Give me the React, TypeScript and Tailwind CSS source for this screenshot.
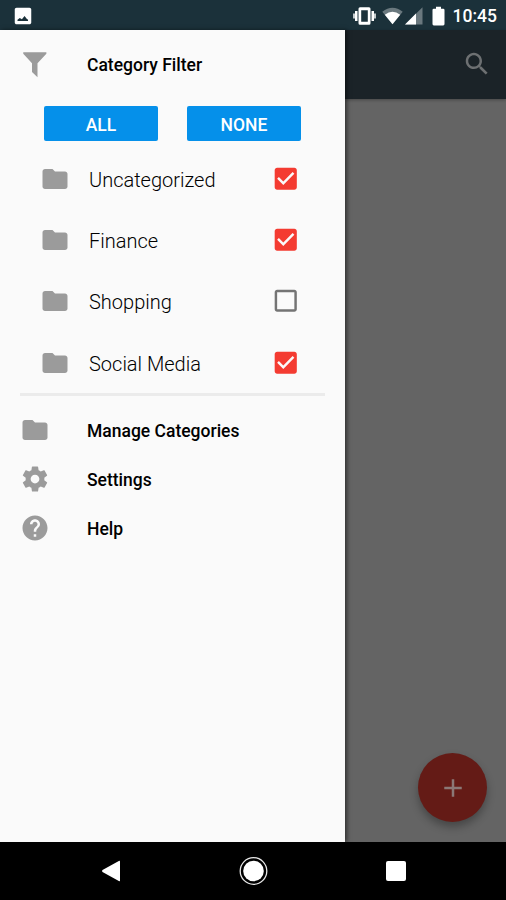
import React from 'react';
import clsx from 'clsx';

interface IconProps {
    d: string;
    className?: string;
    size?: number;
}

interface Category {
    name: string;
    checked: boolean;
}

const FOLDER = 'M10 4H4c-1.1 0-1.99.9-1.99 2L2 18c0 1.1.9 2 2 2h16c1.1 0 2-.9 2-2V8c0-1.1-.9-2-2-2h-8l-2-2z';
const FILTER = 'M2.6 1.7h18.5V3L14 10.6v11.2l-4.4-4.2v-7L2.6 3z';
const SETTINGS =
    'M19.43 12.98c.04-.32.07-.64.07-.98s-.03-.66-.07-.98l2.11-1.65c.19-.15.24-.42.12-.64l-2-3.46c-.12-.22-.39-.3-.61-.22l-2.49 1c-.52-.4-1.08-.73-1.69-.98l-.38-2.65C14.46 2.18 14.25 2 14 2h-4c-.25 0-.46.18-.49.42l-.38 2.65c-.61.25-1.17.59-1.69.98l-2.49-1c-.23-.09-.49 0-.61.22l-2 3.46c-.13.22-.07.49.12.64l2.11 1.65c-.04.32-.07.65-.07.98s.03.66.07.98l-2.11 1.65c-.19.15-.24.42-.12.64l2 3.46c.12.22.39.3.61.22l2.49-1c.52.4 1.08.73 1.69.98l.38 2.65c.03.24.24.42.49.42h4c.25 0 .46-.18.49-.42l.38-2.65c.61-.25 1.17-.59 1.69-.98l2.49 1c.23.09.49 0 .61-.22l2-3.46c.12-.22.07-.49-.12-.64l-2.11-1.65zM12 15.5c-1.93 0-3.5-1.57-3.5-3.5s1.57-3.5 3.5-3.5 3.5 1.57 3.5 3.5-1.57 3.5-3.5 3.5z';
const HELP =
    'M12 2C6.48 2 2 6.48 2 12s4.48 10 10 10 10-4.48 10-10S17.52 2 12 2zm1 17h-2v-2h2v2zm2.07-7.75l-.9.92C13.45 12.9 13 13.5 13 15h-2v-.5c0-1.1.45-2.1 1.17-2.83l1.24-1.26c.37-.36.59-.86.59-1.41 0-1.1-.9-2-2-2s-2 .9-2 2H8c0-2.21 1.79-4 4-4s4 1.79 4 4c0 .88-.36 1.68-.93 2.25z';
const SEARCH =
    'M15.5 14h-.79l-.28-.27C15.41 12.59 16 11.11 16 9.5 16 5.91 13.09 3 9.5 3S3 5.91 3 9.5 5.91 16 9.5 16c1.61 0 3.09-.59 4.23-1.57l.27.28v.79l5 4.99L20.49 19l-4.99-5zm-6 0C7.01 14 5 11.99 5 9.5S7.01 5 9.5 5 14 7.01 14 9.5 11.99 14 9.5 14z';
const PLUS = 'M19 13h-6v6h-2v-6H5v-2h6V5h2v6h6v2z';
const CHECKED =
    'M19 3H5c-1.11 0-2 .9-2 2v14c0 1.1.89 2 2 2h14c1.11 0 2-.9 2-2V5c0-1.1-.89-2-2-2zm-9 14l-5-5 1.41-1.41L10 14.17l7.59-7.59L19 8l-9 9z';
const UNCHECKED =
    'M19 5v14H5V5h14m0-2H5c-1.1 0-2 .9-2 2v14c0 1.1.9 2 2 2h14c1.1 0 2-.9 2-2V5c0-1.1-.9-2-2-2z';
const PHOTO =
    'M21 19V5c0-1.1-.9-2-2-2H5c-1.1 0-2 .9-2 2v14c0 1.1.9 2 2 2h14c1.1 0 2-.9 2-2zM6 17.5V16l2.5-1.8 2.3 1.3 2.9-3.5 2.3 3 1.5 1v1.5z';

const categories: Category[] = [
    { name: 'Uncategorized', checked: true },
    { name: 'Finance', checked: true },
    { name: 'Shopping', checked: false },
    { name: 'Social Media', checked: true },
];

const menuItems = [
    { label: 'Manage Categories', icon: FOLDER },
    { label: 'Settings', icon: SETTINGS },
    { label: 'Help', icon: HELP },
];

function Icon({ d, className, size = 30 }: IconProps) {
    return (
        <svg width={size} height={size} viewBox="0 0 24 24" fill="currentColor" className={clsx('shrink-0', className)}>
            <path d={d} />
        </svg>
    );
}

function StatusBar() {
    return (
        <div className="flex h-[30px] shrink-0 items-center bg-[#1b313a] pt-px pr-[9px] pl-[11.5px] text-white">
            <Icon d={PHOTO} size={22} />
            <div className="ml-auto flex items-center">
                {/* Vibrate */}
                <svg width="23" height="20" viewBox="0 0 23 20" fill="currentColor">
                    <path d="M0 7.5h2v5H0zM21 7.5h2v5h-2z" opacity=".75" />
                    <path d="M2 5h2.5v10H2zM18.5 5H21v10h-2.5z" />
                    <path fillRule="evenodd" d="M7 1.3h9q1.5 0 1.5 1.5v14.4q0 1.5-1.5 1.5H7q-1.5 0-1.5-1.5V2.8Q5.5 1.3 7 1.3zM8.2 4.3v11.4h6.6V4.3z" />
                </svg>
                {/* Wifi */}
                <svg width="21" height="18" viewBox="0 0 21 18" fill="currentColor" className="ml-[6px]">
                    <path d="M.3 4.7Q10.5-3.2 20.7 4.7L10.5 17.3z" opacity=".35" />
                    <path d="M2.8 7.7Q10.5 1.8 18.2 7.7L10.5 17.3z" />
                </svg>
                {/* Signal */}
                <svg width="18" height="18" viewBox="0 0 18 18" fill="currentColor" className="ml-[2px]">
                    <path d="M0 17.5L17.5.2v17.3z" opacity=".35" />
                    <path d="M0 17.5L11 6.6v10.9z" />
                </svg>
                {/* Battery */}
                <svg width="13" height="20" viewBox="0 0 13 20" fill="currentColor" className="ml-[9px]">
                    <path d="M4 .8h5v2h2.2q1.3 0 1.3 1.3v14q0 1.3-1.3 1.3H1.8Q.5 19.4.5 18.1v-14Q.5 2.8 1.8 2.8H4z" />
                </svg>
                <span className="ml-[8px] pt-[2px] text-[17.5px] leading-[27px] font-medium">10:45</span>
            </div>
        </div>
    );
}

function CategoryRow({ name, checked }: Category) {
    return (
        <div className="flex h-[61.3px] items-center pr-[44.5px] pl-[39.5px]">
            <Icon d={FOLDER} className="text-[#9b9b9b]" />
            <span className="ml-[19.5px] pt-[2px] text-[20px] font-light text-black">{name}</span>
            <Icon d={checked ? CHECKED : UNCHECKED} size={29.5} className={clsx('ml-auto', checked ? 'text-[#f43b31]' : 'text-[#747474]')} />
        </div>
    );
}

function Drawer() {
    return (
        <aside className="z-10 flex w-[345px] shrink-0 flex-col bg-[#fafafa] shadow-[2px_0_4px_rgba(0,0,0,0.5)]">
            <div className="flex h-[70px] items-center pl-5">
                <Icon d={FILTER} className="text-[#9b9b9b]" />
                <span className="ml-[37px] pt-px text-[17.5px] font-medium text-black">Category Filter</span>
            </div>
            <div className="mt-[6px] flex gap-[29px] pl-[44px] text-[17.5px] font-medium text-white">
                <button type="button" className="h-[35px] w-[114px] rounded-[2px] bg-[#0590ea] pt-[3px]">ALL</button>
                <button type="button" className="h-[35px] w-[114px] rounded-[2px] bg-[#0590ea] pt-[3px]">NONE</button>
            </div>
            <div className="mt-[7px]">
                {categories.map((category) => (
                    <CategoryRow key={category.name} {...category} />
                ))}
            </div>
            <div className="mx-5 h-[3px] shrink-0 bg-[#ebebeb]" />
            <div className="mt-[9.5px]">
                {menuItems.map((item) => (
                    <div key={item.label} className="flex h-[49px] items-center pl-5">
                        <Icon d={item.icon} className="text-[#9b9b9b]" />
                        <span className="ml-[37px] pt-[2px] text-[17.5px] font-medium text-black">{item.label}</span>
                    </div>
                ))}
            </div>
        </aside>
    );
}

function NavBar() {
    return (
        <div className="flex h-[58px] shrink-0 items-center justify-between bg-black pr-[100px] pl-[101px]">
            <svg width="20" height="22" viewBox="0 0 20 22" fill="white">
                <path d="M18.3.8Q19 .5 19 1.5v19q0 1-.7.7L1.5 12Q.5 11 1.5 10z" />
            </svg>
            <svg width="30" height="30" viewBox="0 0 30 30">
                <circle cx="14.5" cy="15" r="13.3" fill="none" stroke="#e8e8e8" strokeWidth="1.3" />
                <circle cx="14.5" cy="15" r="10.3" fill="white" />
            </svg>
            <div className="size-[20px] rounded-[2px] bg-white" />
        </div>
    );
}

export default function App() {
    return (
        <div className="flex h-[900px] w-[506px] flex-col overflow-hidden font-[Roboto,sans-serif]">
            <StatusBar />
            <div className="flex min-h-0 flex-1">
                <Drawer />
                <main className="relative flex-1 bg-[#646464]">
                    <header className="flex h-[68.5px] items-center justify-end bg-[#1b2328] pr-[14px] shadow-[0_1px_3px_rgba(0,0,0,0.3)]">
                        <Icon d={SEARCH} className="text-[#6d7072]" />
                    </header>
                    <button
                        type="button"
                        className="absolute right-[19px] bottom-[20px] flex size-[69px] items-center justify-center rounded-full bg-[#641b16] text-[#8b7876] shadow-[0_5px_8px_rgba(0,0,0,0.3)]"
                    >
                        <Icon d={PLUS} />
                    </button>
                </main>
            </div>
            <NavBar />
        </div>
    );
}
